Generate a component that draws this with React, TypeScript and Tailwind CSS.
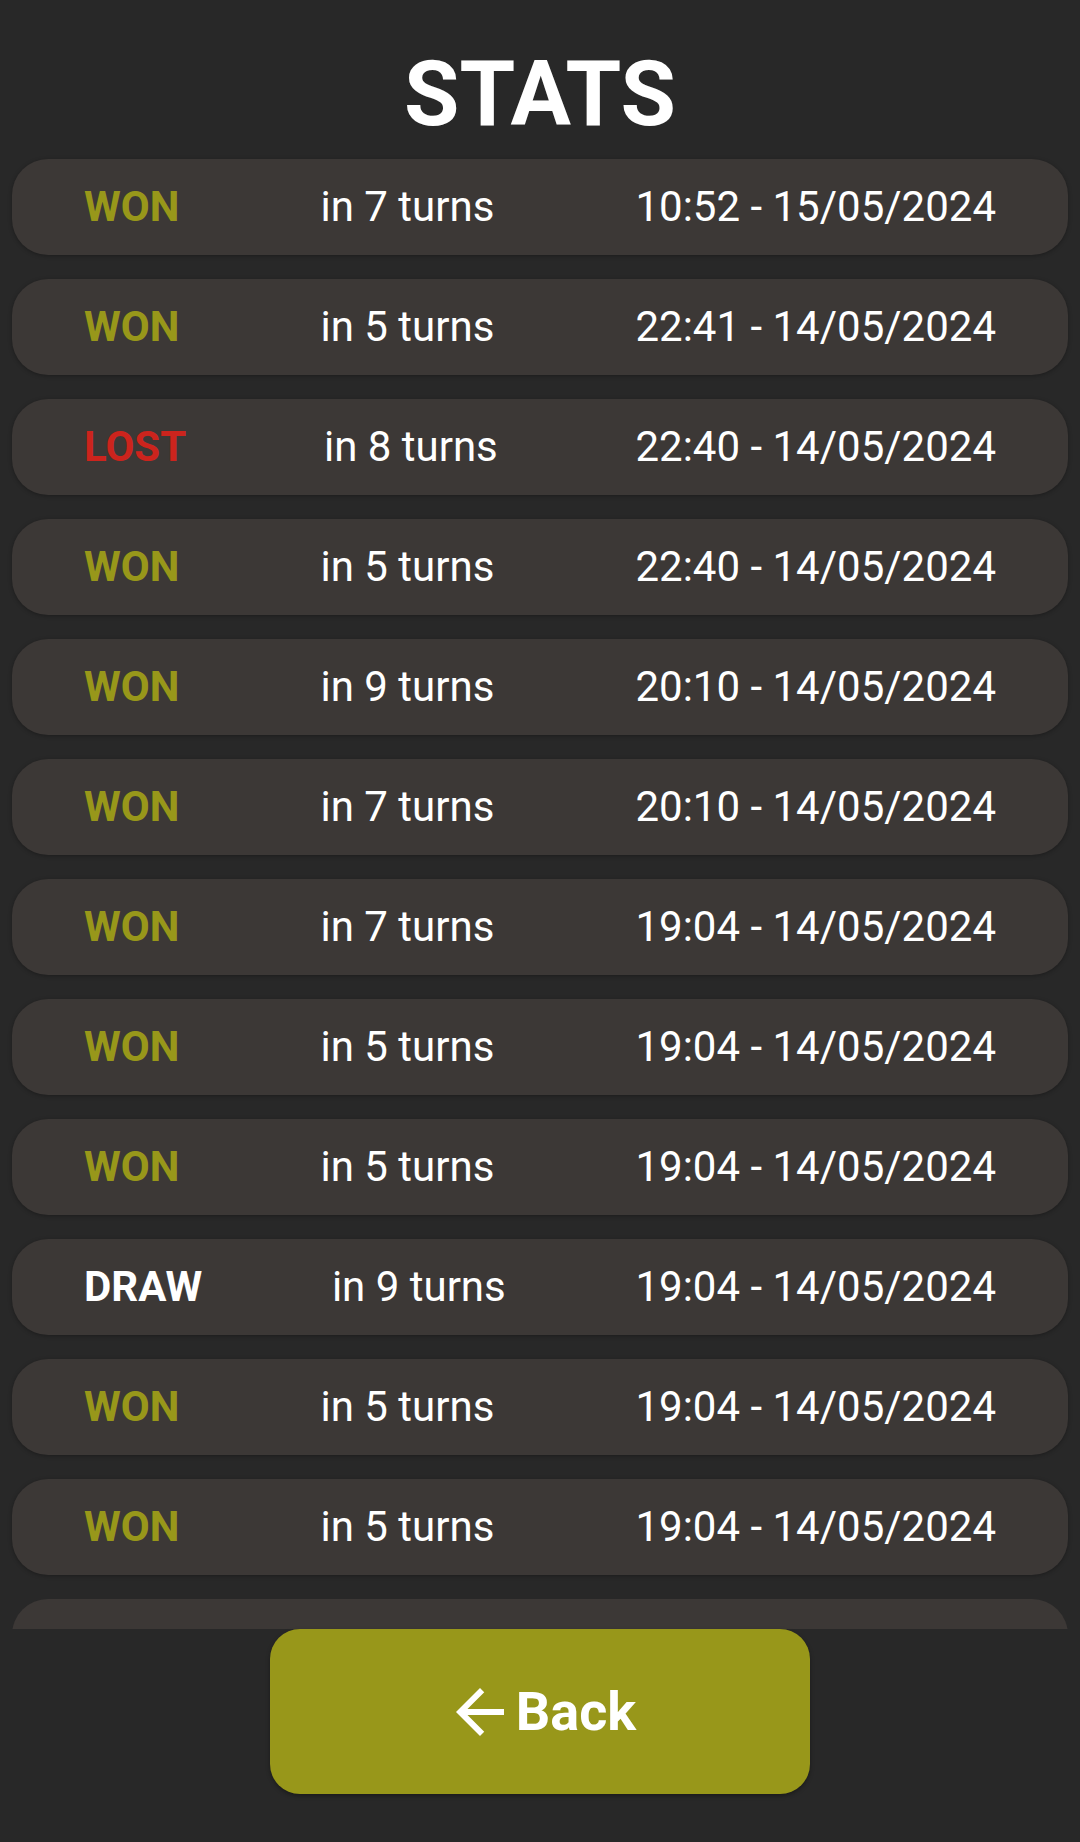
type Game = { result: "WON" | "LOST" | "DRAW"; turns: number; played: string };

const games: Game[] = [
  { result: "WON", turns: 7, played: "10:52 - 15/05/2024" },
  { result: "WON", turns: 5, played: "22:41 - 14/05/2024" },
  { result: "LOST", turns: 8, played: "22:40 - 14/05/2024" },
  { result: "WON", turns: 5, played: "22:40 - 14/05/2024" },
  { result: "WON", turns: 9, played: "20:10 - 14/05/2024" },
  { result: "WON", turns: 7, played: "20:10 - 14/05/2024" },
  { result: "WON", turns: 7, played: "19:04 - 14/05/2024" },
  { result: "WON", turns: 5, played: "19:04 - 14/05/2024" },
  { result: "WON", turns: 5, played: "19:04 - 14/05/2024" },
  { result: "DRAW", turns: 9, played: "19:04 - 14/05/2024" },
  { result: "WON", turns: 5, played: "19:04 - 14/05/2024" },
  { result: "WON", turns: 5, played: "19:04 - 14/05/2024" },
];

const resultColor = {
  WON: "text-[#98971a]",
  LOST: "text-[#cc241d]",
  DRAW: "text-white",
};

function GameRow({ game }: { game: Game }) {
  return (
    <li className="flex h-24 shrink-0 items-center justify-between rounded-[36px] bg-[#3c3836] px-18 text-[42px] leading-[50px] text-white shadow-[0_1px_4px_rgba(0,0,0,0.3)]">
      <span className={`font-bold ${resultColor[game.result]}`}>{game.result}</span>
      <span>in {game.turns} turns</span>
      <time>{game.played}</time>
    </li>
  );
}

export default function App() {
  return (
    <main className="flex h-screen flex-col items-center bg-[#282828] pb-12 font-['Roboto',sans-serif] text-white">
      <h1 className="pt-[51px] pb-2 text-[90px] leading-[88px] font-bold">STATS</h1>
      <ul className="flex min-h-0 w-full flex-1 flex-col gap-6 overflow-y-auto px-3 pt-3 [scrollbar-width:none]">
        {games.map((game, i) => (
          <GameRow key={i} game={game} />
        ))}
        <li className="h-24 shrink-0 rounded-[36px] bg-[#3c3836]" />
      </ul>
      <button
        type="button"
        className="flex h-[165px] w-1/2 shrink-0 items-center justify-center gap-3 rounded-[30px] bg-[#98971a] pl-3 text-[54px] font-bold shadow-[0_2px_4px_rgba(0,0,0,0.35)]"
      >
        <svg viewBox="4 4 16 16" className="size-12" fill="currentColor" aria-hidden="true">
          <path d="M20 11H7.83l5.59-5.59L12 4l-8 8 8 8 1.41-1.41L7.83 13H20v-2z" />
        </svg>
        Back
      </button>
    </main>
  );
}
